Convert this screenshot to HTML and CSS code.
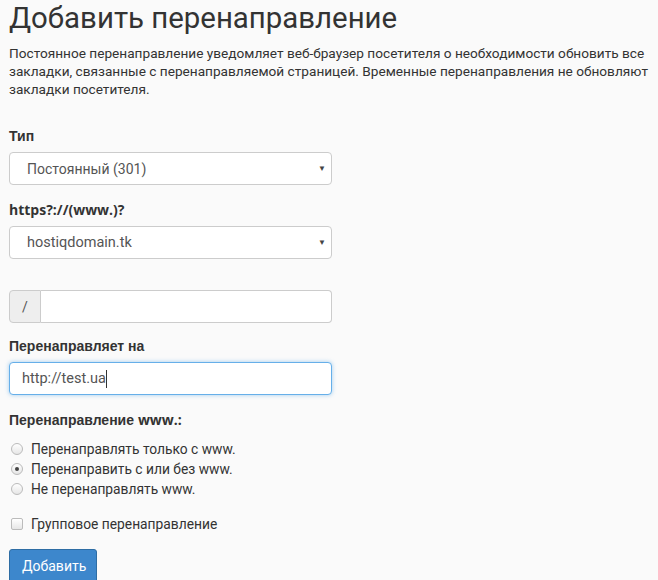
FILE: index.html
```html
<!DOCTYPE html>
<html lang="ru">
<head>
    <meta charset="UTF-8">
    <title>Добавить перенаправление</title>
    <link rel="stylesheet" href="styles.css">
</head>
<body>
    <div class="page">
        <h1>Добавить перенаправление</h1>
        <p class="intro">Постоянное перенаправление уведомляет веб-браузер посетителя о необходимости обновить все закладки, связанные с перенаправляемой страницей. Временные перенаправления не обновляют закладки посетителя.</p>

        <form class="form">
            <div class="group">
                <label class="label">Тип</label>
                <div class="select">
                    <span>Постоянный (301)</span>
                    <span class="caret">▼</span>
                </div>
            </div>

            <div class="group">
                <label class="label"><span class="lat">https?://(www.)?</span></label>
                <div class="select">
                    <span class="lat-value">hostiqdomain.tk</span>
                    <span class="caret">▼</span>
                </div>
            </div>

            <div class="group spaced">
                <div class="input-group">
                    <span class="addon">/</span>
                    <div class="input"></div>
                </div>
            </div>

            <div class="group">
                <label class="label">Перенаправляет на</label>
                <div class="input focus"><span class="lat-value">http://test.ua</span><span class="cursor"></span></div>
            </div>

            <div class="group">
                <label class="label">Перенаправление <span class="lat">www.:</span></label>
                <div class="radios">
                    <div class="option"><span class="radio"></span>Перенаправлять только с www.</div>
                    <div class="option"><span class="radio checked"></span>Перенаправить с или без www.</div>
                    <div class="option"><span class="radio"></span>Не перенаправлять www.</div>
                </div>
            </div>

            <div class="option wild"><span class="check"></span>Групповое перенаправление</div>

            <button type="button" class="btn">Добавить</button>
        </form>
    </div>
</body>
</html>
```

FILE: styles.css
```css
body {
    margin: 0;
    background: #fafafa;
    color: #333;
    font-family: Roboto, "Liberation Sans", sans-serif;
    font-size: 14px;
}
.page {
    padding: 0 6px 0 9px;
}
h1 {
    font-weight: 400;
    font-size: 29.4px;
    line-height: 36px;
    margin: 0 0 8px 0;
}
.intro {
    margin: 0 0 29px 0;
    font-size: 13.65px;
    line-height: 18px;
}
.form {
    width: 323px;
}
.group {
    margin-bottom: 15px;
}
.group.spaced {
    margin-top: 31px;
    margin-bottom: 14px;
}
.label {
    display: block;
    font-family: "Liberation Sans", Arial, sans-serif;
    font-weight: 700;
    font-size: 14px;
    line-height: 19px;
    margin-bottom: 6px;
}
.label .lat {
    font-family: "Open Sans", sans-serif;
}
.select, .input {
    box-sizing: border-box;
    height: 33px;
    background: #fff;
    border: 1px solid #ccc;
    border-radius: 4px;
    display: flex;
    align-items: center;
    padding: 0 12px;
    color: #555;
    font-size: 14px;
}
.select {
    justify-content: space-between;
    padding-left: 17px;
    padding-right: 5px;
}
.lat-value {
    font-size: 14.5px;
}
.caret {
    font-size: 8px;
    color: #444;
}
.input-group {
    display: flex;
}
.addon {
    box-sizing: border-box;
    width: 32px;
    height: 33px;
    display: flex;
    align-items: center;
    justify-content: center;
    background: #eee;
    border: 1px solid #ccc;
    border-radius: 4px 0 0 4px;
    color: #555;
}
.input-group .input {
    flex: 1;
    border-left: 0;
    border-radius: 0 4px 4px 0;
}
.input.focus {
    border-color: #66afe9;
    box-shadow: 0 0 4px rgba(102, 175, 233, 0.6);
}
.cursor {
    display: inline-block;
    width: 1px;
    height: 18px;
    background: #333;
}
.radios {
    margin-top: 9px;
}
.option {
    display: flex;
    align-items: center;
    height: 20px;
    color: #333;
    font-size: 13.8px;
}
.radio, .check {
    box-sizing: border-box;
    width: 12px;
    height: 12px;
    margin: 0 8px 0 2px;
    border: 1px solid #bbb;
    background: linear-gradient(#fff, #e6e6e6);
    position: relative;
}
.radio {
    border-radius: 50%;
}
.radio.checked::after {
    content: "";
    position: absolute;
    left: 3px;
    top: 3px;
    width: 4px;
    height: 4px;
    border-radius: 50%;
    background: #444;
}
.check {
    border-radius: 2px;
}
.wild {
    margin-top: 15px;
}
.btn {
    margin-top: 15px;
    background: #3d87cc;
    color: #fff;
    border: 1px solid #2e6da4;
    border-radius: 3px;
    padding: 6px 12px;
    font-family: Roboto, sans-serif;
    font-size: 14px;
    height: 34px;
    width: 88px;
}
```
